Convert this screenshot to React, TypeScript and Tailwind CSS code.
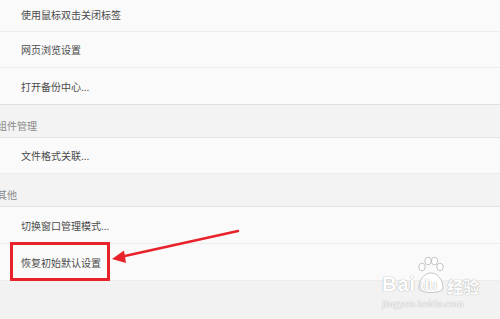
import React from 'react';

const font = { fontFamily: '"Noto Sans CJK SC", "Noto Sans", sans-serif' };

function Item({ label, h }: { label: string; h: string }) {
  return (
    <div className={`flex items-center bg-[#fafafa] border-b border-[#ececec] pl-[21px] text-[10px] text-[#4a4a4a] ${h}`}>
      {label}
    </div>
  );
}

function Section({ label }: { label: string }) {
  return (
    <div className="flex items-end h-[33px] bg-[#f3f3f3] border-b border-[#e4e4e4] pb-[4px] text-[10px] text-[#8a8a8a]">
      <span className="-ml-[3px]">{label}</span>
    </div>
  );
}

const sans = { fontFamily: '"Liberation Sans", sans-serif' };

export default function App() {
  return (
    <div className="relative w-[500px] h-[319px] overflow-hidden bg-[#f2f2f2]" style={font}>
      <div className="flex flex-col">
        <Item label="使用鼠标双击关闭标签" h="h-[32px] pb-[3px]" />
        <Item label="网页浏览设置" h="h-[36px]" />
        <div className="flex items-center h-[37px] bg-[#fafafa] border-b border-[#e0e0e0] pl-[21px] text-[10px] text-[#4a4a4a]">
          打开备份中心...
        </div>
        <Section label="组件管理" />
        <Item label="文件格式关联..." h="h-[36px]" />
        <Section label="其他" />
        <Item label="切换窗口管理模式..." h="h-[37px]" />
        <Item label="恢复初始默认设置" h="h-[37px]" />
      </div>

      {/* annotation box */}
      <div className="absolute left-[10px] top-[242px] w-[100px] h-[39px] border-[3px] border-[#e8222b]" />

      {/* arrow */}
      <svg className="absolute left-0 top-0" width="500" height="319">
        <line x1="238" y1="231" x2="118" y2="257.5" stroke="#e8222b" strokeWidth="2.5" strokeLinecap="round" />
        <polygon points="112,259 124,250.5 126,263" fill="#e8222b" />
      </svg>

      {/* watermark */}
      <div className="absolute left-[382px] top-[266px] flex flex-col items-start text-white [text-shadow:0_0_1px_#b0b0b0,0_0_1px_#b0b0b0]">
        <div className="flex items-end h-[28px]">
          <span className="text-[20px] font-bold leading-none tracking-[1px]" style={sans}>
            Bai
          </span>
          <div className="relative w-[30px] h-[28px] -mb-[2px]">
            <svg className="absolute left-0 -top-[12px]" width="30" height="40" viewBox="0 0 30 40">
              <g fill="#fff" stroke="#c4c4c4" strokeWidth="1">
                <ellipse cx="6" cy="11" rx="3.2" ry="3.8" />
                <ellipse cx="12" cy="5" rx="3.2" ry="3.8" />
                <ellipse cx="18.5" cy="5" rx="3.2" ry="3.8" />
                <ellipse cx="24" cy="11" rx="3.2" ry="3.8" />
                <path d="M3 32 C3 23 9 17 15 17 C21 17 27 23 27 32 C27 38 3 38 3 32 Z" />
              </g>
            </svg>
            <span className="absolute left-[4px] bottom-[4px] text-[14px] font-bold leading-none text-white" style={sans}>
              du
            </span>
          </div>
          <span className="text-[16px] font-bold leading-none ml-[1px]">经验</span>
        </div>
        <span className="text-[11px] leading-none mt-[4px]" style={{ fontFamily: '"Liberation Serif", serif' }}>
          jingyan.baidu.com
        </span>
      </div>
    </div>
  );
}
